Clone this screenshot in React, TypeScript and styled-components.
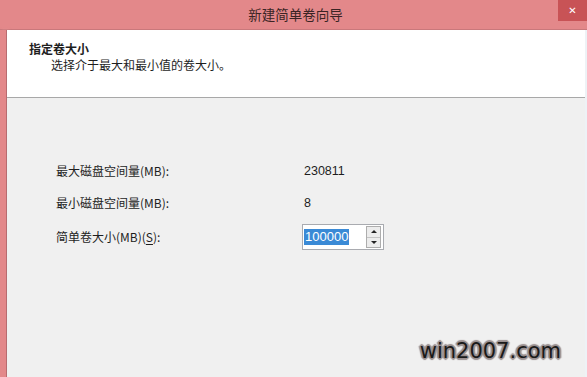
import React from 'react';
import styled, { createGlobalStyle } from 'styled-components';

const rows = [
  { label: '最大磁盘空间量(MB):', value: '230811' },
  { label: '最小磁盘空间量(MB):', value: '8' },
];

export default function App() {
  return (
    <>
      <GlobalStyle />
      <Window>
        <TitleBar>
          <span />
          <Title>新建简单卷向导</Title>
          <CloseButton>✕</CloseButton>
        </TitleBar>
        <Frame>
          <SideBorder />
          <Content>
            <Header>
              <HeaderTitle>指定卷大小</HeaderTitle>
              <HeaderText>选择介于最大和最小值的卷大小。</HeaderText>
            </Header>
            <Body>
              <Form>
                {rows.map((r) => (
                  <React.Fragment key={r.label}>
                    <Label>{r.label}</Label>
                    <Value>{r.value}</Value>
                  </React.Fragment>
                ))}
                <Label>
                  简单卷大小(MB)(<u>S</u>):
                </Label>
                <SpinBox>
                  <Field>
                    <Selected>100000</Selected>
                  </Field>
                  <Spinner>
                    <SpinButton>
                      <Arrow $up />
                    </SpinButton>
                    <SpinButton>
                      <Arrow />
                    </SpinButton>
                  </Spinner>
                </SpinBox>
              </Form>
              <Watermark>win2007.com</Watermark>
            </Body>
          </Content>
        </Frame>
      </Window>
    </>
  );
}

const GlobalStyle = createGlobalStyle`
  html, body {
    margin: 0;
    padding: 0;
    background: #f0f0f0;
  }
  body {
    font-family: "Noto Sans CJK SC", "Liberation Sans", sans-serif;
    color: #1e1e1e;
  }
`;

const Window = styled.div`
  width: 587px;
  height: 377px;
  display: flex;
  flex-direction: column;
  overflow: hidden;
`;

const TitleBar = styled.div`
  height: 29px;
  flex: none;
  background: #e3888a;
  border-bottom: 1px solid #c9787b;
  display: grid;
  grid-template-columns: 1fr auto 1fr;
`;

const Title = styled.div`
  font-size: 13.5px;
  line-height: 29px;
  color: #3a2424;
  padding-left: 4px;
`;

const CloseButton = styled.div`
  justify-self: end;
  width: 29px;
  height: 21px;
  background: #c85356;
  color: #fff;
  font-family: "DejaVu Sans", sans-serif;
  font-size: 10px;
  font-weight: bold;
  display: flex;
  align-items: center;
  justify-content: center;
`;

const Frame = styled.div`
  flex: 1;
  display: flex;
  min-height: 0;
`;

const SideBorder = styled.div`
  width: 6px;
  flex: none;
  background: #e3888a;
  border-right: 1px solid #b86c70;
  box-shadow: 2px 0 3px rgba(240, 170, 170, 0.5);
`;

const Content = styled.div`
  flex: 1;
  display: flex;
  flex-direction: column;
  min-width: 0;
  border-right: 2px solid #eef2f6;
`;

const Header = styled.div`
  height: 68px;
  flex: none;
  background: #fff;
  border-bottom: 1px solid #a8a8a8;
  padding: 11px 0 0 22px;
  box-sizing: border-box;
  font-size: 12px;
  line-height: 16px;
`;

const HeaderTitle = styled.div`
  font-weight: bold;
`;

const HeaderText = styled.div`
  padding-left: 22px;
`;

const Body = styled.div`
  flex: 1;
  background: #f0f0f0;
  display: flex;
  flex-direction: column;
  justify-content: space-between;
  padding: 65px 0 14px 49px;
`;

const Form = styled.div`
  display: grid;
  grid-template-columns: 248px auto;
  grid-auto-rows: 16px;
  row-gap: 16px;
  align-items: center;
  font-size: 12px;
  line-height: 16px;

  & > :nth-child(5),
  & > :nth-child(6) {
    margin-top: 4px;
  }
`;

const Label = styled.div`
  white-space: nowrap;

  u {
    text-underline-offset: 2px;
  }
`;

const Value = styled.div`
  font-family: "Liberation Sans", sans-serif;
  font-size: 12.5px;
`;

const SpinBox = styled.div`
  width: 82px;
  height: 26px;
  margin-left: -2px;
  box-sizing: border-box;
  border: 1px solid #a9abb0;
  background: #fff;
  display: flex;
  align-items: center;
  padding: 2px 2px 2px 1px;
`;

const Field = styled.div`
  flex: 1;
  display: flex;
  align-items: center;
`;

const Selected = styled.span`
  background: #3a8ad6;
  color: #fff;
  font-family: "Liberation Sans", sans-serif;
  font-size: 13px;
  line-height: 16px;
  padding: 0 1px;
`;

const Spinner = styled.div`
  width: 13px;
  height: 20px;
  display: flex;
  flex-direction: column;
  border: 1px solid #adadad;
  background: #ececec;
`;

const SpinButton = styled.div`
  flex: 1;
  display: flex;
  align-items: center;
  justify-content: center;

  & + & {
    border-top: 1px solid #c4c4c4;
  }
`;

const Arrow = styled.div<{ $up?: boolean }>`
  width: 0;
  height: 0;
  border-left: 3px solid transparent;
  border-right: 3px solid transparent;
  ${(p) =>
    p.$up ? 'border-bottom: 3px solid #222;' : 'border-top: 3px solid #222;'}
`;

const Watermark = styled.div`
  align-self: flex-end;
  margin-right: 24px;
  font-family: "DejaVu Sans", sans-serif;
  font-size: 21px;
  line-height: 24px;
  color: #1a1a1a;
  text-shadow: -2px 0 1px #9a9090, 2px 0 1px #9a9090, 0 -2px 1px #9a9090,
    0 2px 1px #9a9090, -1px -1px 1px #9a9090, 1px 1px 1px #9a9090,
    1px -1px 1px #9a9090, -1px 1px 1px #9a9090;
`;
